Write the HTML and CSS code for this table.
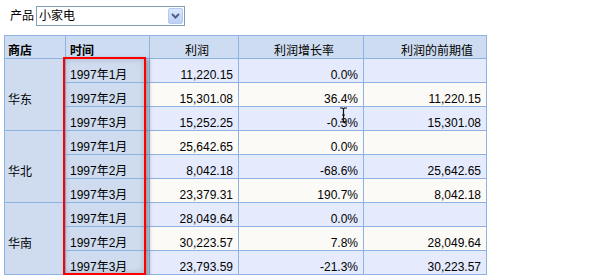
FILE: index.html
```html
<!DOCTYPE html>
<html lang="zh">
<head>
<meta charset="utf-8">
<title>产品利润</title>
<link rel="stylesheet" href="styles.css">
</head>
<body>
<div class="page">
  <div class="toolbar">
    <span class="label">产品</span>
    <div class="select">
      <span class="select-value">小家电</span>
      <span class="select-btn">
        <svg width="9" height="6" viewBox="0 0 9 6"><path d="M1 1 L4.5 4.5 L8 1" fill="none" stroke="#4d6185" stroke-width="2"/></svg>
      </span>
    </div>
  </div>
  <div class="grid-wrap">
    <table class="grid">
      <colgroup>
        <col class="c1"><col class="c2"><col class="c3"><col class="c4"><col class="c5">
      </colgroup>
      <thead>
        <tr>
          <th class="h-store">商店</th>
          <th class="h-time">时间</th>
          <th class="h-num h3">利润</th>
          <th class="h-num h4">利润增长率</th>
          <th class="h-num h5">利润的前期值</th>
        </tr>
      </thead>
      <tbody>
        <tr class="odd"><td class="store" rowspan="3">华东</td><td class="time">1997年1月</td><td class="num">11,220.15</td><td class="num">0.0%</td><td class="num"></td></tr>
        <tr class="even"><td class="time">1997年2月</td><td class="num">15,301.08</td><td class="num">36.4%</td><td class="num">11,220.15</td></tr>
        <tr class="odd"><td class="time">1997年3月</td><td class="num">15,252.25</td><td class="num">-0.3%</td><td class="num">15,301.08</td></tr>
        <tr class="even"><td class="store" rowspan="3">华北</td><td class="time">1997年1月</td><td class="num">25,642.65</td><td class="num">0.0%</td><td class="num"></td></tr>
        <tr class="odd"><td class="time">1997年2月</td><td class="num">8,042.18</td><td class="num">-68.6%</td><td class="num">25,642.65</td></tr>
        <tr class="even"><td class="time">1997年3月</td><td class="num">23,379.31</td><td class="num">190.7%</td><td class="num">8,042.18</td></tr>
        <tr class="odd"><td class="store" rowspan="3">华南</td><td class="time">1997年1月</td><td class="num">28,049.64</td><td class="num">0.0%</td><td class="num"></td></tr>
        <tr class="even"><td class="time">1997年2月</td><td class="num">30,223.57</td><td class="num">7.8%</td><td class="num">28,049.64</td></tr>
        <tr class="odd"><td class="time">1997年3月</td><td class="num">23,793.59</td><td class="num">-21.3%</td><td class="num">30,223.57</td></tr>
      </tbody>
    </table>
    <div class="highlight"></div>
    <svg class="cursor" width="9" height="16" viewBox="0 0 9 16"><path d="M1 1 H3.5 L4.5 2 L5.5 1 H8 M4.5 2 V14 M1 15 H3.5 L4.5 14 L5.5 15 H8 M3 8 H6" fill="none" stroke="#111" stroke-width="1.2"/></svg>
  </div>
</div>
</body>
</html>
```
FILE: styles.css
```css
html, body {
  margin: 0;
  padding: 0;
  background: #ffffff;
}
body {
  font-family: "Liberation Sans", "Noto Sans CJK SC", sans-serif;
  font-size: 12px;
  color: #000;
}
.page {
  padding: 6px 0 0 4px;
}
.toolbar {
  display: flex;
  align-items: center;
  padding-left: 6px;
  height: 20px;
}
.label {
  line-height: 14px;
  margin-right: 2px;
}
.select {
  box-sizing: border-box;
  width: 149px;
  height: 20px;
  border: 1px solid #7f9db9;
  display: flex;
  align-items: center;
  justify-content: space-between;
  padding: 1px;
  background: #fff;
}
.select-value {
  padding-left: 1px;
  line-height: 14px;
}
.select-btn {
  box-sizing: border-box;
  width: 15px;
  height: 16px;
  border: 1px solid #b4c8f0;
  border-radius: 2px;
  background: linear-gradient(#dce8fd, #bcd0f7);
  display: flex;
  align-items: center;
  justify-content: center;
}
.grid-wrap {
  position: relative;
  margin-top: 9px;
  width: 482px;
}
.grid {
  border-collapse: collapse;
  table-layout: fixed;
  width: 482px;
  line-height: 14px;
}
.c1 { width: 61px; }
.c2 { width: 84px; }
.c3 { width: 89px; }
.c4 { width: 125px; }
.c5 { width: 123px; }
.grid th, .grid td {
  border: 1px solid #8db3e2;
  padding: 0;
  white-space: nowrap;
  overflow: hidden;
}
.grid th {
  height: 22px;
  background: #cddcf0;
  vertical-align: bottom;
  font-weight: normal;
  text-align: right;
}
.grid th.h-store, .grid th.h-time {
  font-weight: bold;
  text-align: left;
}
.h-store { padding-left: 3px !important; }
.h-time { padding-left: 4px !important; }
.h3 { padding-right: 29px !important; }
.h4 { padding-right: 29px !important; }
.h5 { padding-right: 13px !important; }
.grid td {
  height: 23px;
  vertical-align: bottom;
}
.grid tr.odd td { background: #e5ebfd; }
.grid tr.even td { background: #fbfaf6; }
.grid td.store {
  background: #cfdcef !important;
  vertical-align: middle;
  padding-top: 10px;
  padding-left: 3px;
}
.grid td.time {
  background: #cfdcef !important;
  padding-left: 4px;
}
.grid td.num {
  text-align: right;
  padding-right: 5px;
}
.highlight {
  position: absolute;
  left: 59px;
  top: 22px;
  width: 79px;
  height: 214px;
  border: 2px solid #ff0000;
  box-shadow: 3px 2px 4px rgba(0, 0, 0, 0.3), inset 0 0 6px rgba(0, 0, 0, 0.18);
  pointer-events: none;
}
.cursor {
  position: absolute;
  left: 335px;
  top: 72px;
}
```
